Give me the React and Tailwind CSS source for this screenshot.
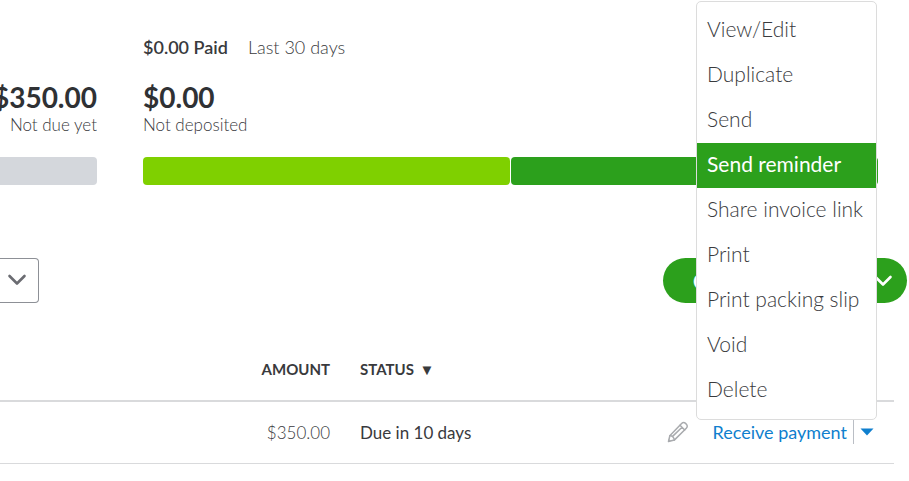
import React, { useState } from "react";
import clsx from "clsx";

const menuItems = [
  { id: 1, name: "View/Edit" },
  { id: 2, name: "Duplicate" },
  { id: 3, name: "Send" },
  { id: 4, name: "Send reminder" },
  { id: 5, name: "Share invoice link" },
  { id: 6, name: "Print" },
  { id: 7, name: "Print packing slip" },
  { id: 8, name: "Void" },
  { id: 9, name: "Delete" },
];

const Chevron = () => (
  <svg width="20" height="12" viewBox="0 0 20 12" fill="none" aria-hidden="true">
    <path
      d="M2.5 2l7.5 7.5L17.5 2"
      stroke="currentColor"
      strokeWidth="2.6"
      strokeLinecap="round"
      strokeLinejoin="round"
    />
  </svg>
);

const Pencil = () => (
  <svg width="22" height="22" viewBox="0 0 22 22" fill="none" aria-hidden="true">
    <g stroke="#a9abae" strokeWidth="1.5" strokeLinejoin="round" strokeLinecap="round">
      <path d="M1.5 20.5l1.3-5.7L14.6 2.6c1.2-1.2 2.7-1.3 3.9-.2l.9.9c1.2 1.2 1.1 2.7-.1 3.9L7.3 19.1z" />
      <path d="M2.8 14.8c2.4-.2 4.6 1.8 4.5 4.3M13 4.3l4.7 4.7M5.6 15.4L15 6.2" />
    </g>
    <path d="M1.2 20.8l.6-2.9 2.3 2.2z" fill="#a9abae" />
  </svg>
);

const MoneyBar = () => (
  <section className="flex gap-[46px] pr-[31px]">
    <div className="flex w-[97px] shrink-0 flex-col items-end justify-end overflow-hidden whitespace-nowrap">
      <p className="text-[28px] leading-8 font-bold text-[#2f3134]">$350.00</p>
      <p className="text-[17px] leading-6">Not due yet</p>
      <div className="mt-5 h-7 w-full rounded-r bg-[#d4d7dc]" />
    </div>
    <div className="flex-1">
      <p className="flex gap-5 text-lg leading-6">
        <span className="font-semibold">$0.00 Paid</span>
        <span>Last 30 days</span>
      </p>
      <p className="mt-[22px] text-[28px] leading-8 font-bold text-[#2f3134]">$0.00</p>
      <p className="text-[17px] leading-6">Not deposited</p>
      <div className="mt-5 flex h-7 gap-px">
        <div className="flex-1 rounded bg-[#7fd000]" />
        <div className="flex-1 rounded bg-[#2ca01c]" />
      </div>
    </div>
  </section>
);

const Toolbar = () => (
  <div className="mt-[73px] flex justify-between pr-0.5">
    <label className="relative text-[#6b6c72]">
      <select
        aria-label="Date"
        className="block h-[45px] w-[39px] appearance-none rounded-r border border-l-0 border-[#8d9096] bg-white pl-[38px]"
      >
        <option>All</option>
      </select>
      <span className="pointer-events-none absolute top-4 right-3">
        <Chevron />
      </span>
    </label>
    <div className="flex h-[45px] w-[244px] items-center justify-between rounded-full bg-[#2ca01c] pr-[14px] pl-[30px] text-white">
      <button type="button" className="text-xl font-bold">
        Create invoice
      </button>
      <button type="button" aria-label="More create options">
        <Chevron />
      </button>
    </div>
  </div>
);

const RowMenu = ({ setOpen }) => {
  const [active, setActive] = useState(4);

  return (
    <ul
      role="menu"
      className="absolute right-[17px] bottom-full z-10 w-[181px] rounded-[5px] border border-[#dcdcdc] bg-white py-1.5"
    >
      {menuItems.map((item) => (
        <li key={item.id} role="none">
          <button
            type="button"
            role="menuitem"
            className={clsx(
              "block h-[45px] w-full pb-1 pl-2.5 text-left text-[21px] whitespace-nowrap",
              active === item.id
                ? "bg-[#2ca01c] font-normal text-white"
                : "font-light text-[#393a3d]"
            )}
            onMouseEnter={() => setActive(item.id)}
            onClick={() => setOpen(false)}
          >
            {item.name}
          </button>
        </li>
      ))}
    </ul>
  );
};

const InvoiceTable = () => {
  const [open, setOpen] = useState(true);

  return (
    <div className="mt-9 pr-[15px]">
      <table className="w-full border-collapse text-base">
        <thead>
          <tr className="h-[62px] border-b-2 border-[#d9dadc] text-[15px] font-bold text-[#393a3d]">
            <th className="w-[330px] text-right">AMOUNT</th>
            <th className="pl-[30px] text-left" aria-sort="descending">
              STATUS <span className="ml-0.5 text-[15px]">▼</span>
            </th>
            <th aria-label="Action" />
          </tr>
        </thead>
        <tbody>
          <tr className="h-[62px] border-b border-[#d9dadc]">
            <td className="text-right text-[17px]">$350.00</td>
            <td className="pl-[30px] text-[17px] font-normal">Due in 10 days</td>
            <td>
              <div className="relative flex items-center justify-end pr-5 font-normal text-[#0f7fce]">
                <button type="button" aria-label="Edit" className="mr-6">
                  <Pencil />
                </button>
                <a href="#receive" className="text-lg leading-6">
                  Receive payment
                </a>
                <button
                  type="button"
                  aria-label="More actions"
                  className="ml-1.5 flex h-6 items-center border-l border-[#babec5] pl-1.5"
                  onClick={() => setOpen(!open)}
                >
                  <svg width="14" height="8" viewBox="0 0 14 8" aria-hidden="true">
                    <path d="M.5.5h13L7 7.5z" fill="currentColor" />
                  </svg>
                </button>
                {open && <RowMenu setOpen={setOpen} />}
              </div>
            </td>
          </tr>
        </tbody>
      </table>
    </div>
  );
};

const App = () => {
  return (
    <main className="min-h-screen overflow-hidden bg-white pt-[35px] font-['Lato','Open_Sans',sans-serif] font-light text-[#393a3d]">
      <MoneyBar />
      <Toolbar />
      <InvoiceTable />
    </main>
  );
};

export default App;
